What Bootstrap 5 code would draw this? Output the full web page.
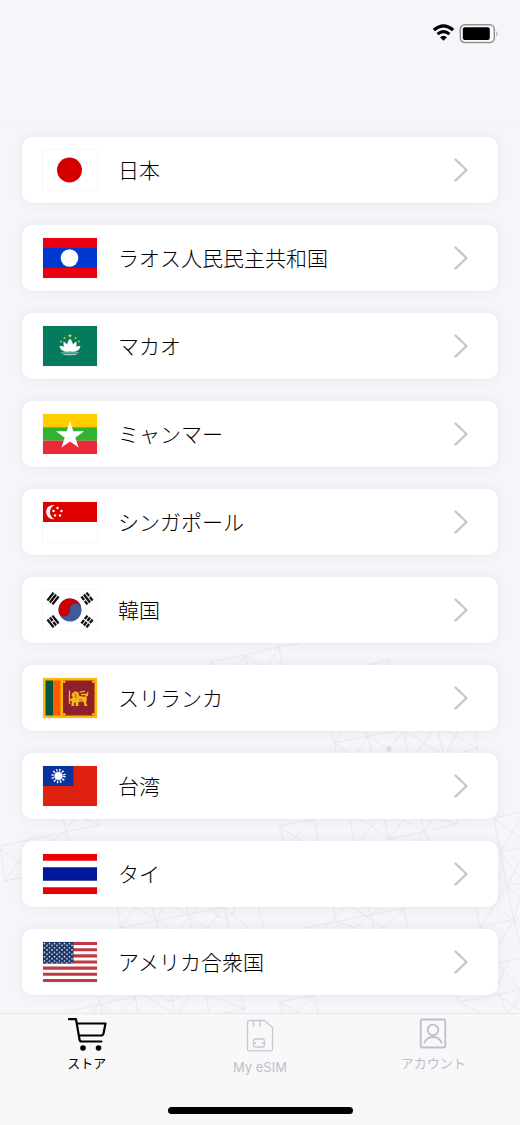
<!DOCTYPE html>
<html lang="ja">
<head>
<meta charset="utf-8">
<meta name="viewport" content="width=device-width, initial-scale=1">
<title>ストア</title>
<link href="https://cdn.jsdelivr.net/npm/bootstrap@5.3.0/dist/css/bootstrap.min.css" rel="stylesheet">
<style>
  body { background: #f5f6fa; color: #111; font-family: "Noto Sans CJK JP", sans-serif; }
  .status-bar { padding: 24px 22px 0 0; height: 122px; }
  .store { padding: 14px 22px 18px; border-top: 1px solid #f3f4f8; }
  .mesh { bottom: 0; left: 0; z-index: 0; }
  .country-list { gap: 22px; z-index: 1; }
  .country { height: 66px; padding: 0 29px 0 20px; gap: 20px; background: #fff; border-radius: 11px;
    box-shadow: 0 0 12px rgba(50, 50, 90, .08); color: #000; font-size: 21px; line-height: 30px; font-weight: 300; }
  .country:hover { color: #000; }
  .country span { padding-bottom: 2px; }
  .flag { width: 56px; height: 42px; border: 1px solid #f7f7f9; flex: none; }
  .tab-bar { background: #f8f8f8; border-top: 1px solid #e6e7ea; height: 112px; }
  .tab { color: #bbbfd0; font-size: 13px; line-height: 18px; padding-top: 3px; }
  .tab.active { color: #000; }
  .latin { font-family: Inter, sans-serif; line-height: 20px; }
  .home-bar { width: 185px; height: 7px; background: #000; margin-bottom: 11px; }
</style>
</head>
<body>
<div class="min-vh-100 d-flex flex-column">
  <header class="status-bar d-flex justify-content-end align-items-start gap-1">
    <svg width="23" height="18" viewBox="0 0 23 18" fill="none" stroke="#000" stroke-width="3" aria-label="Wi-Fi">
      <path d="M1.800 6Q11.500-2.200 21.200 6M5.500 10.200Q11.500 5 17.500 10.200"/>
      <path d="M11.500 16.800L8 13.300Q11.500 10.300 15 13.300Z" fill="#000" stroke="none"/>
    </svg>
    <svg width="39" height="20" viewBox="0 0 39 20" aria-label="バッテリー">
      <rect x="1.300" y=".8" width="34" height="17.800" rx="4.500" fill="#fbfbfc" stroke="#929294" stroke-width="1.500"/>
      <rect x="3.800" y="3.300" width="27" height="12.800" rx="2" fill="#000"/>
      <path d="M37.500 7Q39.300 9.700 37.500 12.500Z" fill="#8c8c90"/>
    </svg>
  </header>

  <main class="store position-relative flex-grow-1">
    <svg class="mesh position-absolute w-100" viewBox="0 640 520 373" fill="none" stroke="#e8e9ed" stroke-width="1" aria-hidden="true">
      <path d="M210 662L245 655L279 647L300 643M245 655L238 665M245 655L247 665M245 655L260 665M279 647L268 665M279 647L282 665M278 643L279 647M210 662L216 665M368 665L389 660L390 665"/>
      <path d="M332 731L336 752M342 731L334 743L368 736L396 731M334 743L347 752M362 731L368 736L389 750M366 731L372 752M368 736L358 752M389 750L403 731L408 752M405 731L439 752M432 731L417 752M438 731L443 752M458 731L447 752M448 731L478 749L475 731M478 749L463 752"/>
      <circle cx="389" cy="749" r="2.500" fill="#dcdde2"/>
      <path d="M63 819L69 841M74 819L65 832L52 841M0 846L100 825L98 819M100 825L84 819M0 846L5 881L24 877M5 881L22 857M0 849L22 864M279 826L314 819L318 841M279 826L284 841M279 826L302 841M314 819L292 841M350 819L354 841M360 819L389 839M378 819L362 838M384 819L389 839L458 824L440 819M404 819L389 839M402 819L424 831L430 841M433 819L424 831L416 841M421 819L424 831M458 824L456 819"/>
      <path d="M494 819L500 852L507 886L514 920L520 946M494 818L520 812M494 818L520 838M520 820L500 852L520 848M500 852L520 878M520 861L507 886L520 883M498 875L507 886L520 897M507 886L480 927L476 907M480 927L520 918M498 910L520 924M520 896L514 920L498 945M480 927L498 940"/>
      <path d="M117 907L121 928L224 907L248 928M121 928L135 907L170 928M152 907L158 928M155 921L164 907M186 907L192 928M198 907L180 928M175 907L207 928M224 907L208 928M224 907L229 928M258 907L264 928M305 928L405 908M333 907L336 921L340 928M325 928L345 907M336 921L355 928M352 907L384 928M368 907L374 928M380 907L355 928M403 907L408 928M405 908L385 928"/>
      <circle cx="224" cy="907" r="11"/>
      <path d="M67 1012L136 996M104 995L92 1013M98 995L102 1013M100 1004L115 1013M135 995L138 1013M137 996L120 1013M145 995L172 1013M172 995L174 1013M190 995L178 1013M206 995L209 1013M210 995L245 1009L241 995M245 1009L225 1013M279 1002L314 995L318 1013M279 1002L283 1013M279 1002L300 1013M314 995L297 1013M455 995L459 1002L520 990M459 1002L480 1013M500 994L507 1013M498 963L520 958M498 963L520 990M510 958L498 985M498 995L520 1010M520 996L508 1013"/>
      <circle cx="170" cy="990" r="11"/>
    </svg>

    <nav class="country-list d-flex flex-column position-relative" aria-label="国を選択">
      <a href="#" class="country d-flex align-items-center text-decoration-none">
        <svg class="flag" viewBox="0 0 54 40" aria-hidden="true"><path d="M0 0h54v40H0z" fill="#fff"/><circle cx="26.500" cy="20" r="12.500" fill="#d30000"/></svg>
        <span class="flex-grow-1">日本</span>
        <svg width="16" height="26" viewBox="0 0 16 26" aria-hidden="true"><path id="chevron" d="M2.500 2.500L13.500 13L2.500 23.500" fill="none" stroke="#c5c5c8" stroke-width="2.300" stroke-linecap="round" stroke-linejoin="round"/></svg>
      </a>
      <a href="#" class="country d-flex align-items-center text-decoration-none">
        <svg class="flag" viewBox="0 0 54 40" aria-hidden="true"><path d="M0 0h54v40H0z" fill="#eb0010"/><path d="M0 10h54v20H0z" fill="#0038d2"/><circle cx="26.500" cy="20" r="8.800" fill="#fff"/></svg>
        <span class="flex-grow-1">ラオス人民民主共和国</span>
        <svg width="16" height="26" viewBox="0 0 16 26" aria-hidden="true"><use href="#chevron"/></svg>
      </a>
      <a href="#" class="country d-flex align-items-center text-decoration-none">
        <svg class="flag" viewBox="0 0 54 40" aria-hidden="true">
          <path d="M0 0h54v40H0z" fill="#047b5d"/>
          <path d="M17.500 26.500A10.500 6 0 0 0 36.500 26.500Z" fill="#b5d9cf"/>
          <path d="M17 27.600H37M18 29.600H36" stroke="#047b5d" stroke-width=".8"/>
          <g fill="#fff"><path d="M27 12.500Q22 18 25 25H29Q32 18 27 12.500Z"/><path d="M20.500 15.500Q19.500 23 27 25Q25.500 18 20.500 15.500ZM33.500 15.500Q34.500 23 27 25Q28.500 18 33.500 15.500ZM16.500 20Q18 27 27 25.500Q23 19.500 16.500 20ZM37.500 20Q36 27 27 25.500Q31 19.500 37.500 20Z"/></g>
          <path d="M27 7.500l.6 1.400h1.500l-1.200 1 .5 1.500-1.400-.9-1.400.9.500-1.500-1.200-1h1.500z" fill="#f5d313"/>
          <g fill="#d8cd20"><circle cx="21.500" cy="12" r=".9"/><circle cx="32.500" cy="12" r=".9"/><circle cx="18" cy="15.500" r=".9"/><circle cx="36" cy="15.500" r=".9"/></g>
        </svg>
        <span class="flex-grow-1">マカオ</span>
        <svg width="16" height="26" viewBox="0 0 16 26" aria-hidden="true"><use href="#chevron"/></svg>
      </a>
      <a href="#" class="country d-flex align-items-center text-decoration-none">
        <svg class="flag" viewBox="0 0 54 40" aria-hidden="true"><path d="M0 0h54v13.500H0z" fill="#ffcd00"/><path d="M0 13.300h54v13.500H0z" fill="#34b233"/><path d="M0 26.700h54V40H0z" fill="#ec2939"/><path d="M27 7L30.300 17.300H41L32.300 23.700L35.600 33.500L27 27.500L18.400 33.500L21.700 23.700L13 17.300H23.700Z" fill="#fff"/></svg>
        <span class="flex-grow-1">ミャンマー</span>
        <svg width="16" height="26" viewBox="0 0 16 26" aria-hidden="true"><use href="#chevron"/></svg>
      </a>
      <a href="#" class="country d-flex align-items-center text-decoration-none">
        <svg class="flag" viewBox="0 0 54 40" aria-hidden="true"><path d="M0 0h54v40H0z" fill="#fff"/><path d="M0 0h54v20H0z" fill="#df0000"/><path d="M11.500 3A7.200 7.200 0 1 0 11.500 17.200A7.800 7.800 0 0 1 11.500 3Z" fill="#fff"/><g fill="#fff"><circle cx="14.500" cy="6" r="1.200"/><circle cx="18.500" cy="9" r="1.200"/><circle cx="10.500" cy="9" r="1.200"/><circle cx="12" cy="13.500" r="1.200"/><circle cx="17" cy="13.500" r="1.200"/></g></svg>
        <span class="flex-grow-1">シンガポール</span>
        <svg width="16" height="26" viewBox="0 0 16 26" aria-hidden="true"><use href="#chevron"/></svg>
      </a>
      <a href="#" class="country d-flex align-items-center text-decoration-none">
        <svg class="flag" viewBox="0 0 54 40" aria-hidden="true">
          <path d="M0 0h54v40H0z" fill="#fff"/>
          <g transform="rotate(-8 27 20)"><circle cx="27" cy="20" r="11.500" fill="#3d5a9b"/><path d="M15.500 20A11.500 11.500 0 0 1 38.500 20A5.750 5.750 0 0 0 27 20A5.750 5.750 0 0 1 15.500 20Z" fill="#cb0000"/></g>
          <g stroke="#111" stroke-width="2.300" fill="none">
            <path transform="translate(10 8.500) rotate(-52)" d="M-5-3.200H5M-5 0H5M-5 3.200H5"/>
            <path transform="translate(44 31.500) rotate(-52)" d="M-5-3.200H-.6M.6-3.200H5M-5 0H-.6M.6 0H5M-5 3.200H-.6M.6 3.200H5"/>
            <path transform="translate(44 8.500) rotate(52)" d="M-5-3.200H-.6M.6-3.200H5M-5 0H5M-5 3.200H-.6M.6 3.200H5"/>
            <path transform="translate(10 31.500) rotate(52)" d="M-5-3.200H5M-5 0H-.6M.6 0H5M-5 3.200H5"/>
          </g>
        </svg>
        <span class="flex-grow-1">韓国</span>
        <svg width="16" height="26" viewBox="0 0 16 26" aria-hidden="true"><use href="#chevron"/></svg>
      </a>
      <a href="#" class="country d-flex align-items-center text-decoration-none">
        <svg class="flag" viewBox="0 0 54 40" aria-hidden="true">
          <path d="M0 0h54v40H0z" fill="#ffb70a"/><path d="M2.500 2.500H10V37.500H2.500z" fill="#005543"/><path d="M10 2.500h7.500v35H10z" fill="#ff5b00"/><path d="M20 2.500h31.500v35H20z" fill="#8d2029"/>
          <g fill="#ffb70a"><circle cx="21.200" cy="3.700" r="1.300"/><circle cx="50.300" cy="3.700" r="1.300"/><circle cx="21.200" cy="36.300" r="1.300"/><circle cx="50.300" cy="36.300" r="1.300"/></g>
          <path d="M29 15.500L31.500 13.300L35 14L36.500 18L43 19L44 21.500L43 24.500L44.500 28H41L41.500 26L40 23.500L35.500 24L35.500 28H32L33 26.500L32 24L31 25L31.200 28H28.300L28.800 24L28 22.500H25.700V20.800H28.200L30 19L28.500 17.500Z" fill="#f3b718"/>
          <path d="M26.500 12.500V26M36.500 14.500Q39 13 42 13.500M38 16.500H43Q45.500 16 44.500 14M43.500 20Q41 18 45 17" stroke="#f3b718" stroke-width="1.300" fill="none"/>
          <path d="M31 15.500l1.500.7M33.500 16.500l-1.500 2 2 1.500M36 22h3" stroke="#8d2029" stroke-width=".6" fill="none"/>
        </svg>
        <span class="flex-grow-1">スリランカ</span>
        <svg width="16" height="26" viewBox="0 0 16 26" aria-hidden="true"><use href="#chevron"/></svg>
      </a>
      <a href="#" class="country d-flex align-items-center text-decoration-none">
        <svg class="flag" viewBox="0 0 54 40" aria-hidden="true"><path d="M0 0h54v40H0z" fill="#de2110"/><path d="M0 0h30.500v20H0z" fill="#08349c"/><circle cx="15.500" cy="10" r="5.900" fill="none" stroke="#fff" stroke-width="2.600" stroke-dasharray="1.300 1.789"/><circle cx="15.500" cy="10" r="4.100" fill="#fff"/></svg>
        <span class="flex-grow-1">台湾</span>
        <svg width="16" height="26" viewBox="0 0 16 26" aria-hidden="true"><use href="#chevron"/></svg>
      </a>
      <a href="#" class="country d-flex align-items-center text-decoration-none">
        <svg class="flag" viewBox="0 0 54 40" aria-hidden="true"><path d="M0 0h54v40H0z" fill="#e90000"/><path d="M0 6.700h54v26.600H0z" fill="#fff"/><path d="M0 13.300h54v13.400H0z" fill="#00199b"/></svg>
        <span class="flex-grow-1">タイ</span>
        <svg width="16" height="26" viewBox="0 0 16 26" aria-hidden="true"><use href="#chevron"/></svg>
      </a>
      <a href="#" class="country d-flex align-items-center text-decoration-none">
        <svg class="flag" viewBox="0 0 54 40" aria-hidden="true">
          <defs><pattern id="stars" width="5" height="4.400" patternUnits="userSpaceOnUse"><circle cx="1.500" cy="1.500" r=".8" fill="#e8ecf5"/><circle cx="4" cy="3.500" r=".8" fill="#e8ecf5"/></pattern></defs>
          <path d="M0 0h54v40H0z" fill="#fff"/>
          <path d="M0 1.540H54M0 7.700H54M0 13.850H54M0 20H54M0 26.150H54M0 32.300H54M0 38.460H54" stroke="#bf3a43" stroke-width="3.080"/>
          <path d="M0 0h30.500v21.500H0z" fill="#1c3365"/><path d="M0 0h30.500v21.500H0z" fill="url(#stars)"/>
        </svg>
        <span class="flex-grow-1">アメリカ合衆国</span>
        <svg width="16" height="26" viewBox="0 0 16 26" aria-hidden="true"><use href="#chevron"/></svg>
      </a>
    </nav>
  </main>

  <footer class="tab-bar d-flex flex-column justify-content-between align-items-center">
    <nav class="row g-0 w-100 text-center" aria-label="メイン">
      <a href="#" class="tab active col d-flex flex-column align-items-center text-decoration-none" aria-current="page">
        <svg width="40" height="37" viewBox="0 0 40 37" fill="none" stroke="#000" stroke-width="2.200" stroke-linecap="round" stroke-linejoin="round" aria-hidden="true">
          <path d="M2 2.200H9L12.500 22.500Q12.800 24.500 14.500 24.500H34.500M10 6.500H38.500L36.500 16.500Q36 18.500 34 18.500H12"/>
          <circle cx="16" cy="31" r="2.800" fill="#000" stroke="none"/><circle cx="31.500" cy="31" r="2.800" fill="#000" stroke="none"/>
        </svg>
        <span>ストア</span>
      </a>
      <a href="#" class="tab latin col d-flex flex-column align-items-center text-decoration-none">
        <svg width="28" height="40" viewBox="0 0 28 40" fill="none" stroke="#c4c8d8" stroke-width="1.300" stroke-linejoin="round" aria-hidden="true">
          <path d="M3.500 3.500H18.500L26.500 10.500V32Q26.500 33.800 24.700 33.800H3.300Q1.500 33.800 1.500 32V5.500Q1.500 3.500 3.500 3.500ZM7.500 3.500V10M14 3.500V10"/>
          <rect x="7.500" y="22" width="11" height="8" rx="2"/><path d="M7.500 26H10M16 26H18.500"/>
        </svg>
        <span>My eSIM</span>
      </a>
      <a href="#" class="tab col d-flex flex-column align-items-center text-decoration-none">
        <svg width="28" height="37" viewBox="0 0 28 37" fill="none" stroke="#bbbfd0" stroke-width="1.800" stroke-linecap="round" aria-hidden="true">
          <rect x="1.700" y="2.500" width="24.600" height="28" rx="1.500"/><circle cx="14" cy="13" r="5.300"/><path d="M5.500 25.500Q8 20 14 20T22.500 25.500"/>
        </svg>
        <span>アカウント</span>
      </a>
    </nav>
    <div class="home-bar rounded-pill"></div>
  </footer>
</div>
<script src="https://cdn.jsdelivr.net/npm/bootstrap@5.3.0/dist/js/bootstrap.bundle.min.js"></script>
</body>
</html>
